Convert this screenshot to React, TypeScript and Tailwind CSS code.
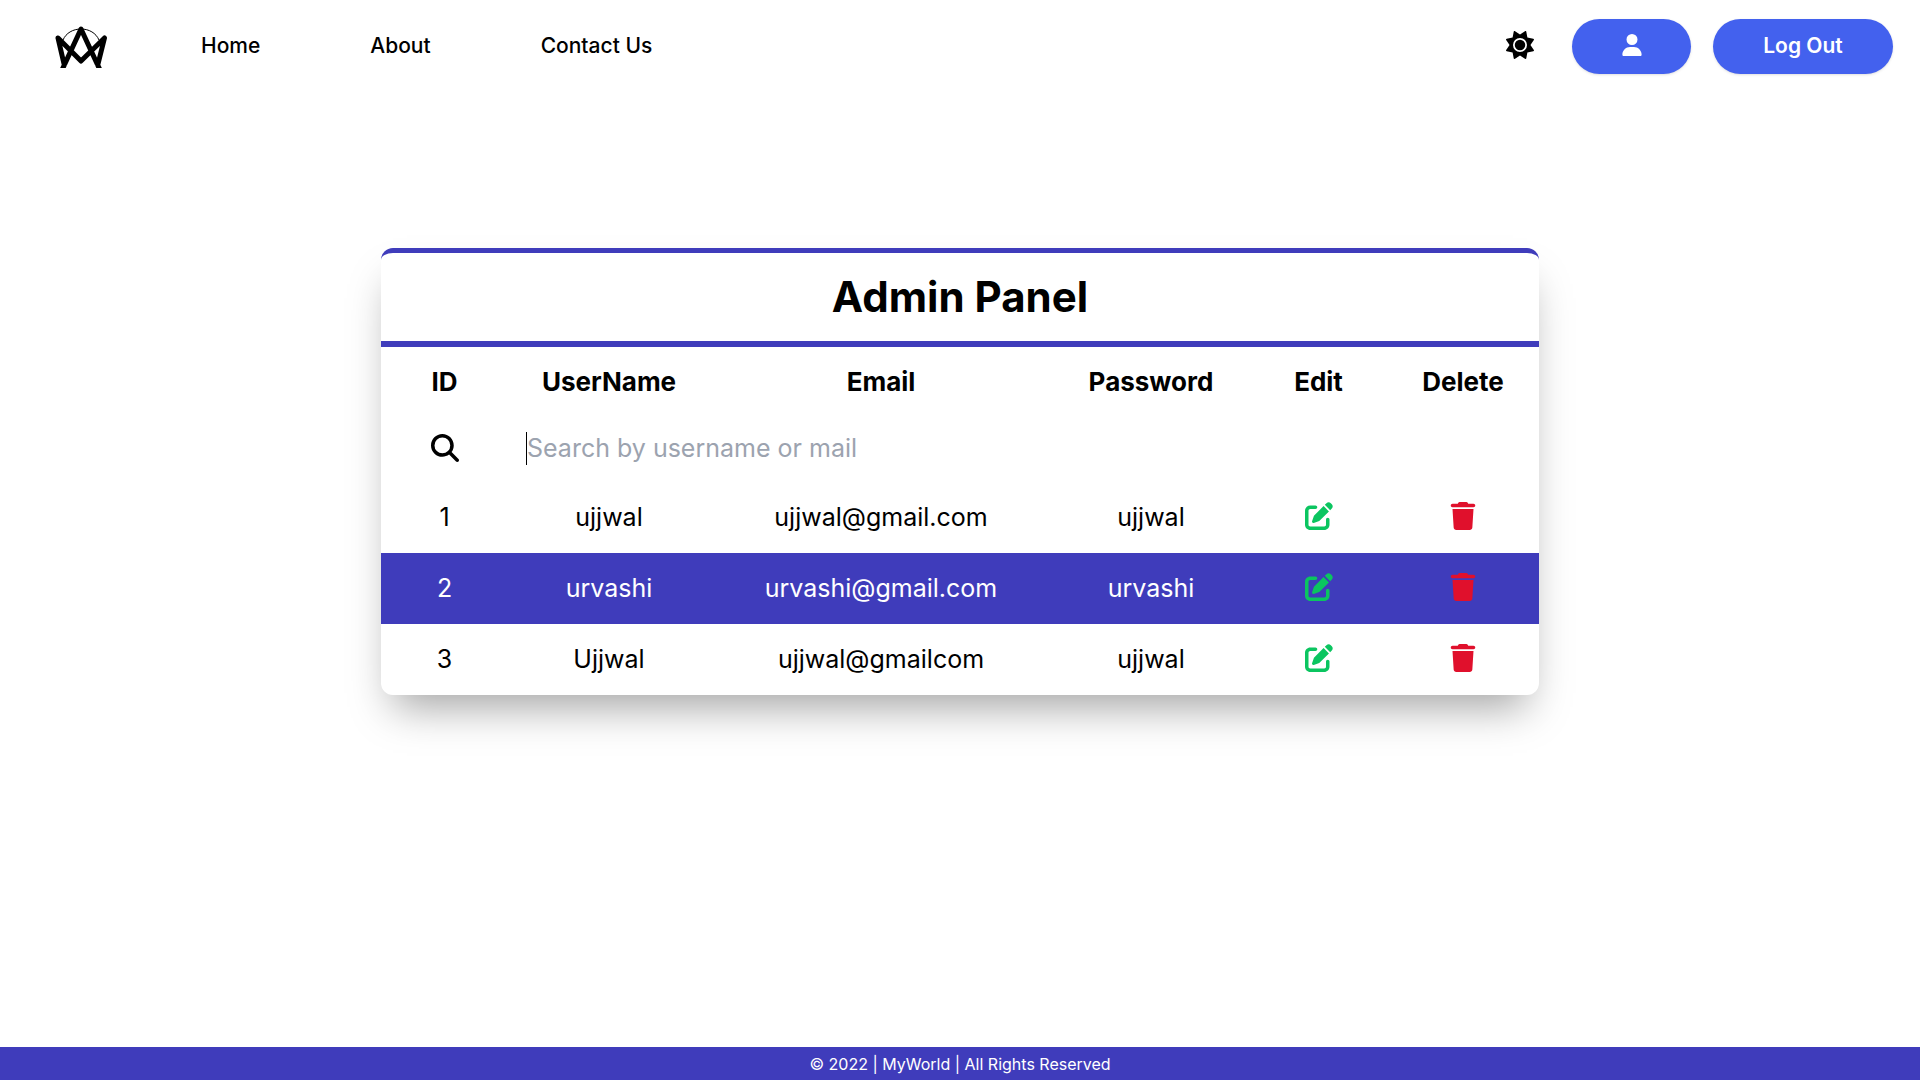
import React, { useState } from "react";
import { FaMagnifyingGlass, FaPenToSquare, FaSun, FaTrash, FaUser } from "react-icons/fa6";

type User = { id: number; name: string; email: string; password: string };

const users: User[] = [
  { id: 1, name: "ujjwal", email: "ujjwal@gmail.com", password: "ujjwal" },
  { id: 2, name: "urvashi", email: "urvashi@gmail.com", password: "urvashi" },
  { id: 3, name: "Ujjwal", email: "ujjwal@gmailcom", password: "ujjwal" },
];

function Logo() {
  return (
    <svg viewBox="0 0 54 44" className="h-11 w-[54px]" fill="none" aria-hidden="true">
      <path d="M9 16C12 9 19 5 27 5s15 4 18 11" stroke="#000" strokeWidth="1" />
      <path
        d="M8 46L27 5l19 41M10.500 42L4 14l23 23 23.500-23L43.500 42"
        stroke="#000"
        strokeWidth="5"
        strokeLinejoin="round"
      />
    </svg>
  );
}

function Header() {
  return (
    <header className="flex h-[92px] items-center pr-[27px] pl-[54px]">
      <a href="#home" aria-label="MyWorld">
        <Logo />
      </a>
      <nav className="ml-[93px] flex gap-[110px] text-[21px] font-medium">
        <a href="#home">Home</a>
        <a href="#about">About</a>
        <a href="#contact">Contact Us</a>
      </nav>
      <div className="ml-auto flex items-center text-[21px] font-medium">
        <button type="button" aria-label="Toggle theme" className="mr-[38px] pb-[2px]">
          <FaSun size={28} />
        </button>
        <button
          type="button"
          aria-label="Profile"
          className="mr-[22px] flex h-[55px] w-[119px] items-center justify-center rounded-full bg-[#4361ee] pb-[2px] text-white shadow-sm"
        >
          <FaUser size={22} />
        </button>
        <button type="button" className="h-[55px] w-[180px] rounded-full bg-[#4361ee] font-semibold text-white shadow-sm">
          Log Out
        </button>
      </div>
    </header>
  );
}

function UserRow({ user }: { user: User }) {
  return (
    <tr className={user.id % 2 === 0 ? "h-[71px] bg-[#3f3cbb] text-white" : "h-[71px]"}>
      <td>{user.id}</td>
      <td>{user.name}</td>
      <td>{user.email}</td>
      <td>{user.password}</td>
      <td className="pb-[3px]">
        <button type="button" aria-label={`Edit ${user.name}`} className="mx-auto block text-[#0bc560]">
          <FaPenToSquare size={28} />
        </button>
      </td>
      <td className="pb-[3px]">
        <button type="button" aria-label={`Delete ${user.name}`} className="mx-auto block text-[#e0102c]">
          <FaTrash size={28} />
        </button>
      </td>
    </tr>
  );
}

export default function App() {
  const [query, setQuery] = useState("");
  const shown = users.filter((u) => (u.name + u.email).toLowerCase().includes(query.toLowerCase()));

  return (
    <div className="flex min-h-screen flex-col bg-white font-['Inter',sans-serif] text-black">
      <Header />
      <main className="flex flex-1 justify-center px-6 pt-[156px]">
        <section className="w-full max-w-[1158px] self-start overflow-hidden rounded-xl border-t-[5px] border-[#3f3cbb] bg-white shadow-[0_24px_40px_-12px_rgba(0,0,0,0.36)]">
          <h1 className="flex h-[94px] items-center justify-center border-b-[6px] border-[#3f3cbb] pb-[2px] text-[42px] font-bold">
            Admin Panel
          </h1>
          <table className="w-full table-fixed text-center text-[25px]">
            <colgroup>
              <col className="w-[127px]" />
              <col className="w-[202px]" />
              <col className="w-[342px]" />
              <col className="w-[198px]" />
              <col className="w-[137px]" />
              <col className="w-[152px]" />
            </colgroup>
            <thead>
              <tr className="h-[68px] text-[26px]">
                <th scope="col">ID</th>
                <th scope="col">UserName</th>
                <th scope="col">Email</th>
                <th scope="col">Password</th>
                <th scope="col">Edit</th>
                <th scope="col">Delete</th>
              </tr>
            </thead>
            <tbody>
              <tr className="h-[67px]">
                <td>
                  <label htmlFor="search" aria-label="Search" className="flex justify-center pb-[2px]">
                    <FaMagnifyingGlass size={28} />
                  </label>
                </td>
                <td colSpan={5} className="px-[18px] text-left">
                  <input
                    id="search"
                    type="text"
                    value={query}
                    onChange={(e) => setQuery(e.target.value)}
                    placeholder="Search by username or mail"
                    className="block h-[33px] w-full border-l border-black outline-none placeholder:text-[#9ca3af]"
                  />
                </td>
              </tr>
              {shown.map((u) => (
                <UserRow key={u.id} user={u} />
              ))}
            </tbody>
          </table>
        </section>
      </main>
      <footer className="flex h-[33px] items-center justify-center bg-[#3f3cbb] text-base text-white">
        © 2022 | MyWorld | All Rights Reserved
      </footer>
    </div>
  );
}
